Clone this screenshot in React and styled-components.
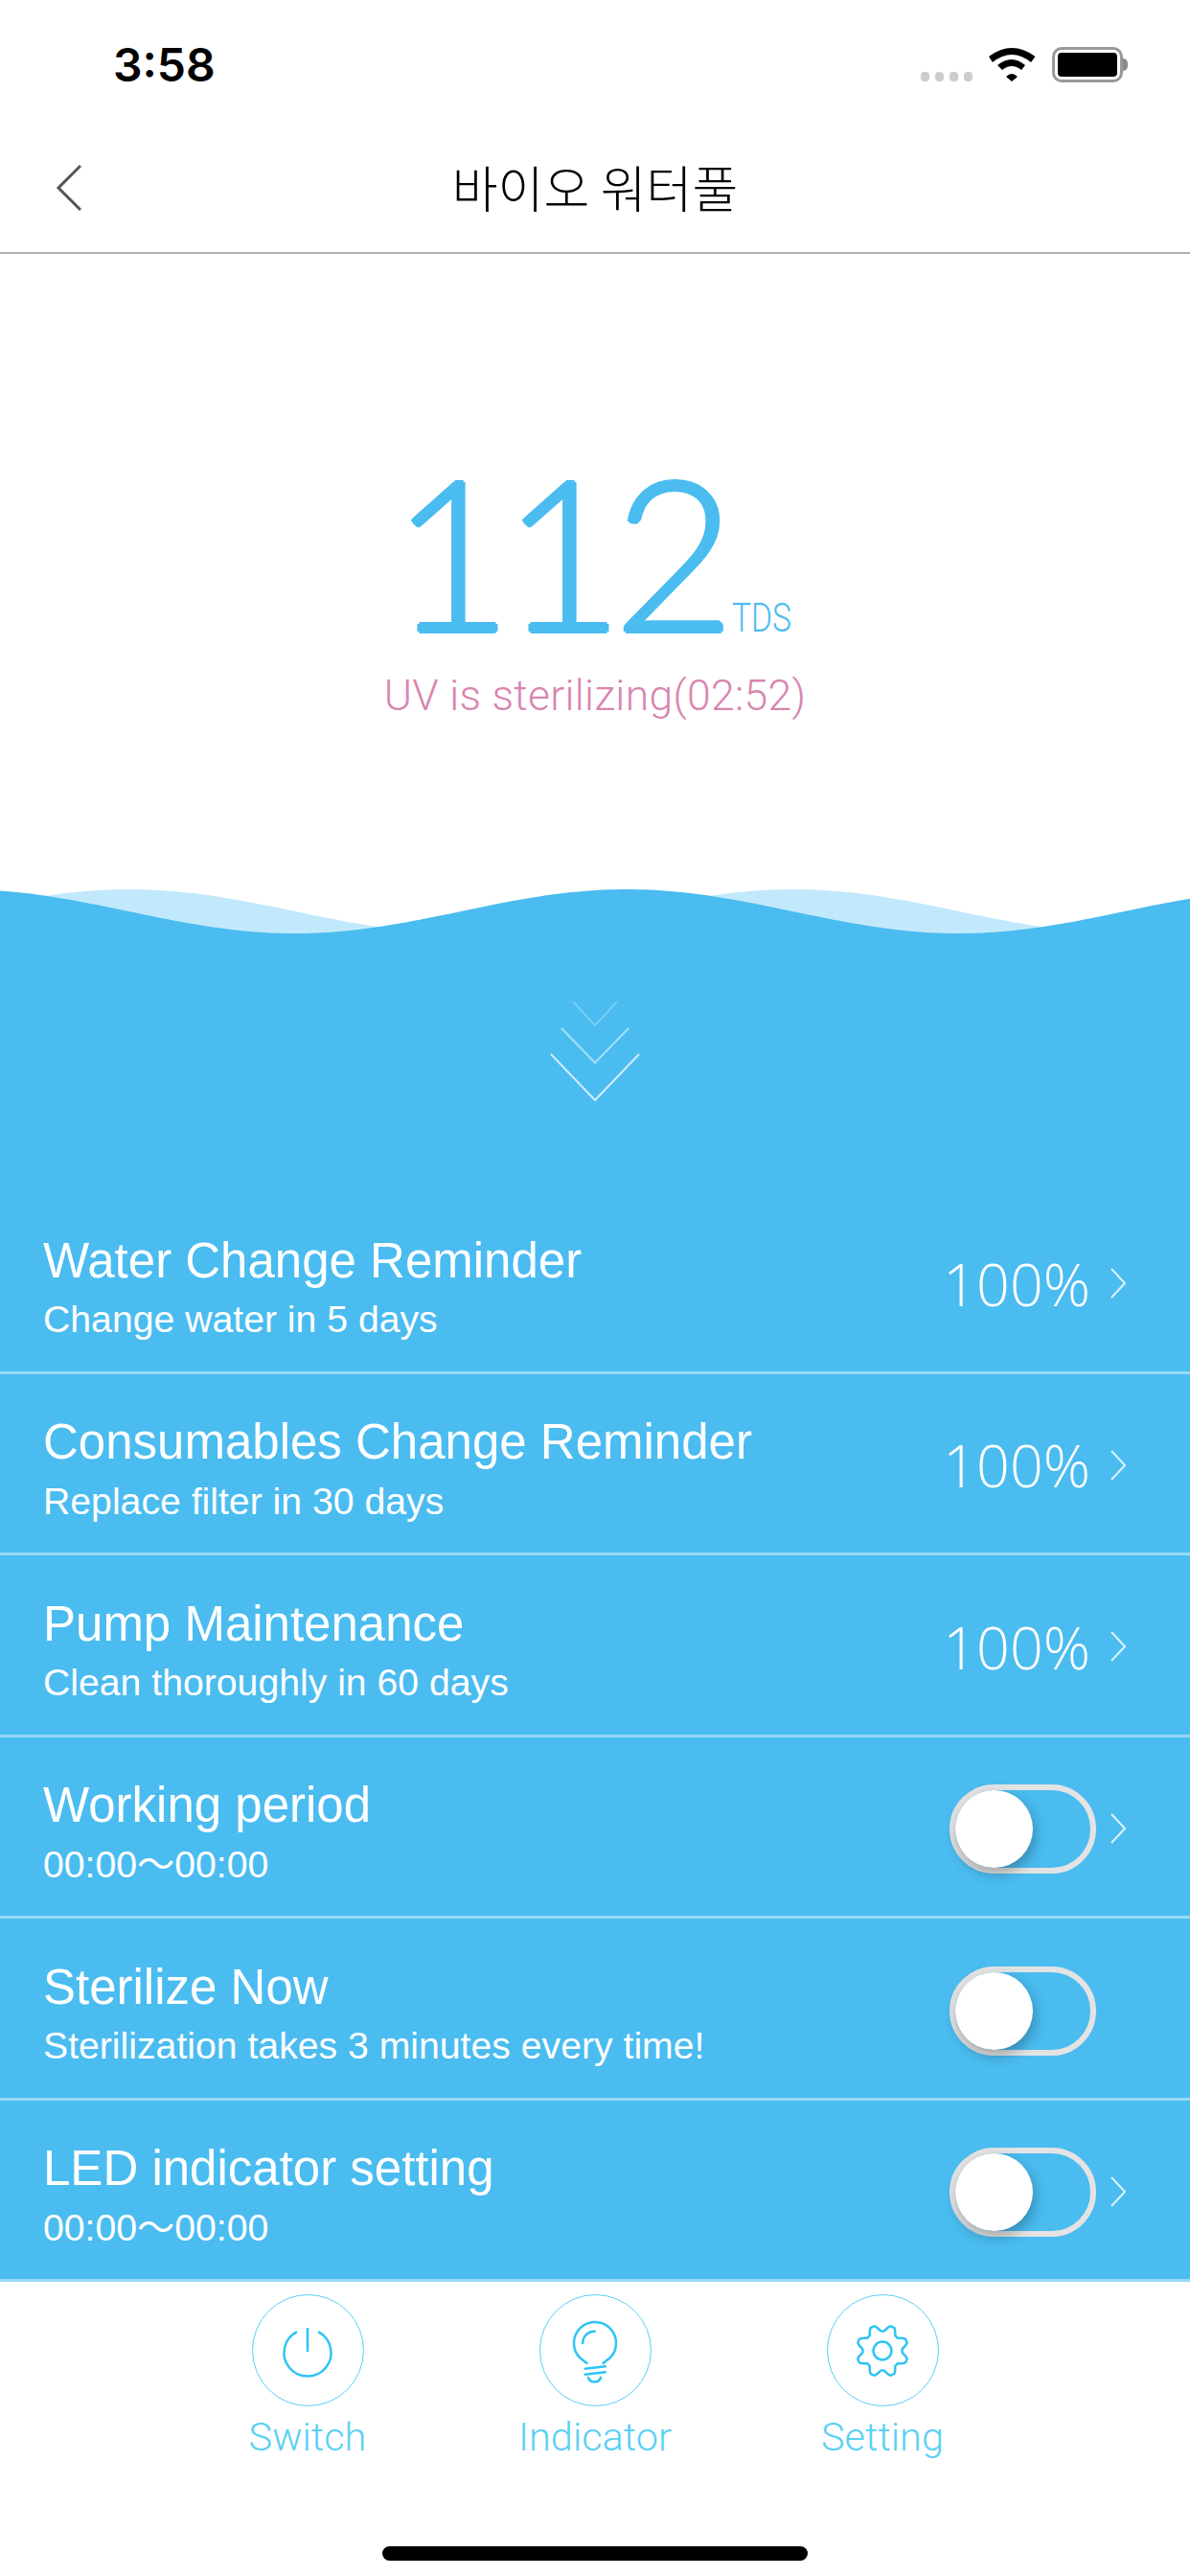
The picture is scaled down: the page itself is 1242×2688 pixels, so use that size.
import React from 'react'
import styled, { createGlobalStyle } from 'styled-components'

const BLUE = '#4abcf0'

const rows = [
  { title: 'Water Change Reminder', sub: 'Change water in 5 days', value: '100%', arrow: true },
  { title: 'Consumables Change Reminder', sub: 'Replace filter in 30 days', value: '100%', arrow: true },
  { title: 'Pump Maintenance', sub: 'Clean thoroughly in 60 days', value: '100%', arrow: true },
  { title: 'Working period', sub: '00:00～00:00', arrow: true },
  { title: 'Sterilize Now', sub: 'Sterilization takes 3 minutes every time!', arrow: false },
  { title: 'LED indicator setting', sub: '00:00～00:00', arrow: true },
]

// sine wave, crest x in page px, svg starts at y=925
function wavePath(crest) {
  let d = 'M0 60 '
  for (let x = 0; x <= 1242; x += 6) {
    const y = 26 - 23 * Math.cos((2 * Math.PI * (x - crest)) / 693)
    d += `L${x} ${y.toFixed(2)} `
  }
  return d + 'L1242 60 Z'
}

// 8 lobes with flat tops, centred on 30,30
function gearPath() {
  let d = ''
  for (let a = 0; a < 360; a += 2) {
    const t = (a * Math.PI) / 180
    const wave = Math.max(-1, Math.min(1, 1.25 * Math.cos(8 * (t - Math.PI / 8))))
    const r = 23.8 + 3.2 * wave
    d += `${a === 0 ? 'M' : 'L'}${(30 + r * Math.cos(t)).toFixed(2)} ${(30 + r * Math.sin(t)).toFixed(2)} `
  }
  return d + 'Z'
}

function App() {
  return (
    <Screen>
      <GlobalStyle />
      <StatusBar>
        <Clock>3:58</Clock>
        <StatusIcons>
          <SignalDots>
            <i /><i /><i /><i />
          </SignalDots>
          <svg width="49" height="35" viewBox="0 0 49 35">
            <path d="M0 9Q24 -9 48.5 9L44 15Q24 -1 4 15Z" fill="#000" />
            <path d="M9 18Q24 6 38 18L34 23Q24 15 14 23Z" fill="#000" />
            <path d="M18 30Q24 24 30 30L24 35Z" fill="#000" />
          </svg>
          <Battery>
            <BatteryFill />
          </Battery>
        </StatusIcons>
      </StatusBar>
      <NavBar>
        <BackIcon width="30" height="52" viewBox="0 0 30 52">
          <path d="M27 3L4 26L27 49" fill="none" stroke="#555" strokeWidth="3" />
        </BackIcon>
        <NavTitle>바이오 워터풀</NavTitle>
      </NavBar>
      <Hero>
        <Reading>
          <BigNumber>112</BigNumber>
          <Unit>TDS</Unit>
        </Reading>
        <Status>UV is sterilizing(02:52)</Status>
      </Hero>
      <WaveSvg width="1242" height="60" viewBox="0 0 1242 60">
        <path d={wavePath(135)} fill="#c2e9fb" />
        <path d={wavePath(654)} fill={BLUE} />
      </WaveSvg>
      <Water>
        <DownArrows width="100" height="105" viewBox="0 0 100 105">
          <path d="M27 0L50 25L73 0" fill="none" stroke="#fff" strokeOpacity=".25" strokeWidth="2" />
          <path d="M15 28L50 64L85 28" fill="none" stroke="#fff" strokeOpacity=".5" strokeWidth="2" />
          <path d="M4 55L50 103L96 55" fill="none" stroke="#fff" strokeOpacity=".75" strokeWidth="2" />
        </DownArrows>
        <List>
          {rows.map((row) => (
            <Row key={row.title}>
              <RowText>
                <RowTitle>{row.title}</RowTitle>
                <RowSub>{row.sub}</RowSub>
              </RowText>
              <RowEnd>
                {row.value ? (
                  <Value>{row.value}</Value>
                ) : (
                  <Track>
                    <Knob />
                  </Track>
                )}
                <Arrow $hidden={!row.arrow} width="16" height="32" viewBox="0 0 16 32">
                  <path d="M1 1L15 16L1 31" fill="none" stroke="#fff" strokeOpacity=".8" strokeWidth="2" />
                </Arrow>
              </RowEnd>
            </Row>
          ))}
        </List>
      </Water>
      <TabBar>
        <Tab>
          <TabCircle>
            <svg width="56" height="56" viewBox="0 0 56 56" fill="none" stroke="#2ec4f4" strokeWidth="2.5">
              <path d="M28 4V29" />
              <path d="M17 8.2A24.5 24.5 0 1 0 39 8.2" />
            </svg>
          </TabCircle>
          <TabLabel>Switch</TabLabel>
        </Tab>
        <Tab>
          <TabCircle>
            <svg width="50" height="68" viewBox="0 0 50 68" fill="none" stroke="#2ec4f4" strokeWidth="2.5" strokeLinecap="round">
              <path d="M16.5 47L9 41C5 37 3 32 3 26A22 22 0 0 1 47 26C47 32 45 37 41 41L33.5 47" />
              <path d="M12.3 26C12.3 19 17 14 24.7 13.7" />
              <path d="M14.7 52.7L35.7 50.3" />
              <path d="M14.7 58.7L35.7 56.3" />
              <path d="M18 62C20 68 29 68 31 62" />
            </svg>
          </TabCircle>
          <TabLabel>Indicator</TabLabel>
        </Tab>
        <Tab>
          <TabCircle>
            <svg width="60" height="60" viewBox="0 0 60 60" fill="none" stroke="#2ec4f4" strokeWidth="2.5" strokeLinejoin="round">
              <path d={gearPath()} />
              <circle cx="30" cy="30" r="9.5" />
            </svg>
          </TabCircle>
          <TabLabel>Setting</TabLabel>
        </Tab>
      </TabBar>
      <HomeBar />
    </Screen>
  )
}

const GlobalStyle = createGlobalStyle`
  html, body {
    margin: 0;
    padding: 0;
    background: #fff;
  }
`

const Screen = styled.div`
  width: 1242px;
  height: 2688px;
  display: flex;
  flex-direction: column;
  overflow: hidden;
  background: #fff;
  font-family: Roboto, 'Noto Sans CJK KR', sans-serif;
`

const StatusBar = styled.div`
  height: 132px;
  box-sizing: border-box;
  padding: 40px 70px 0 118px;
  display: flex;
  justify-content: space-between;
  align-items: flex-start;
`

const Clock = styled.span`
  font-family: Inter, sans-serif;
  font-size: 48px;
  line-height: 56px;
  font-weight: 600;
  color: #000;
`

const StatusIcons = styled.div`
  display: flex;
  align-items: flex-start;
  padding-top: 10px;
  gap: 17px;
`

const SignalDots = styled.div`
  display: flex;
  gap: 5.5px;
  margin-top: 25px;

  i {
    width: 9.5px;
    height: 10px;
    border-radius: 4px;
    background: #ccc;
  }
`

const Battery = styled.div`
  position: relative;
  width: 74px;
  height: 37px;
  margin-top: -1px;
  box-sizing: border-box;
  border: 3px solid #999;
  border-radius: 10px;
  padding: 3px;

  &::after {
    content: '';
    position: absolute;
    right: -8px;
    top: 9px;
    width: 5px;
    height: 13px;
    border-radius: 0 5px 5px 0;
    background: #8a8a8a;
  }
`

const BatteryFill = styled.div`
  height: 100%;
  background: #000;
  border-radius: 4px;
`

const NavBar = styled.div`
  height: 133px;
  box-sizing: border-box;
  border-bottom: 2px solid #b0b0b0;
  padding: 0 58px 6px;
  display: flex;
  align-items: center;
  position: relative;
  justify-content: center;
`

const BackIcon = styled.svg`
  position: absolute;
  left: 57px;
  top: 38px;
`

const NavTitle = styled.span`
  font-family: 'Noto Sans CJK KR', sans-serif;
  font-size: 52px;
  font-weight: 300;
  color: #000;
`

const Hero = styled.div`
  height: 660px;
  box-sizing: border-box;
  padding-top: 190px;
  display: flex;
  flex-direction: column;
  align-items: center;
`

const Reading = styled.div`
  display: flex;
  align-items: baseline;
  height: 240px;
`

const BigNumber = styled.span`
  font-family: Lato, sans-serif;
  font-size: 219px;
  font-weight: 300;
  line-height: 240px;
  letter-spacing: -11px;
  color: ${BLUE};
  text-shadow: 2px 0 0 ${BLUE}, -2px 0 0 ${BLUE}, 0 2px 0 ${BLUE}, 0 -2px 0 ${BLUE};
`

const Unit = styled.span`
  font-size: 42px;
  font-weight: 300;
  color: ${BLUE};
  display: inline-block;
  transform: scaleX(0.8);
  transform-origin: left center;
  margin-left: 8px;
  margin-right: -8px;
`

const Status = styled.div`
  font-size: 44.5px;
  line-height: 52px;
  font-weight: 300;
  letter-spacing: 0.3px;
  color: #d985b0;
  margin-top: 5px;
`

const WaveSvg = styled.svg`
  display: block;
  flex: none;
`

const Water = styled.div`
  flex: none;
  background: ${BLUE};
  display: flex;
  flex-direction: column;
  align-items: center;
  padding-top: 60px;
`

const DownArrows = styled.svg`
  display: block;
  flex: none;
`

const List = styled.div`
  align-self: stretch;
  margin-top: 94px;
`

const Row = styled.div`
  height: 189.5px;
  box-sizing: border-box;
  border-bottom: 3px solid #96d9f7;
  padding: 0 67px 0 45px;
  display: flex;
  align-items: center;
  justify-content: space-between;
`

const RowText = styled.div`
  display: flex;
  flex-direction: column;
  gap: 7.5px;
  color: #fff;
  padding-top: 10.5px;
  font-family: 'Liberation Sans', 'Noto Sans CJK KR', sans-serif;
`

const RowTitle = styled.div`
  font-size: 51px;
  line-height: 62px;
`

const RowSub = styled.div`
  font-size: 39.2px;
  line-height: 46px;
`

const RowEnd = styled.div`
  display: flex;
  align-items: center;
  gap: 15px;
  padding-top: 4px;
`

const Value = styled.span`
  font-family: 'Open Sans', sans-serif;
  font-size: 61px;
  font-weight: 300;
  color: #fff;
  margin-right: 6px;
`

const Track = styled.div`
  width: 153px;
  height: 93px;
  margin-top: 2px;
  box-sizing: border-box;
  border: 6px solid #e3e3e3;
  border-radius: 47px;
  display: flex;
  align-items: center;
`

const Knob = styled.div`
  width: 81px;
  height: 81px;
  border-radius: 50%;
  background: #fff;
  box-shadow: 2px 6px 14px rgba(0, 0, 0, 0.28);
`

const Arrow = styled.svg`
  display: block;
  visibility: ${(p) => (p.$hidden ? 'hidden' : 'visible')};
`

const TabBar = styled.div`
  display: flex;
  justify-content: center;
  padding-top: 13px;
`

const Tab = styled.div`
  width: 300px;
  display: flex;
  flex-direction: column;
  align-items: center;
  gap: 9px;
`

const TabCircle = styled.div`
  width: 117px;
  height: 117px;
  box-sizing: border-box;
  border: 1.5px solid #5ad0f5;
  border-radius: 50%;
  display: flex;
  align-items: center;
  justify-content: center;
`

const TabLabel = styled.span`
  font-size: 41.5px;
  line-height: 46px;
  font-weight: 300;
  color: #5ad0f5;
`

const HomeBar = styled.div`
  width: 444px;
  height: 15px;
  border-radius: 8px;
  background: #000;
  margin: 91px auto 0;
`

export default App
